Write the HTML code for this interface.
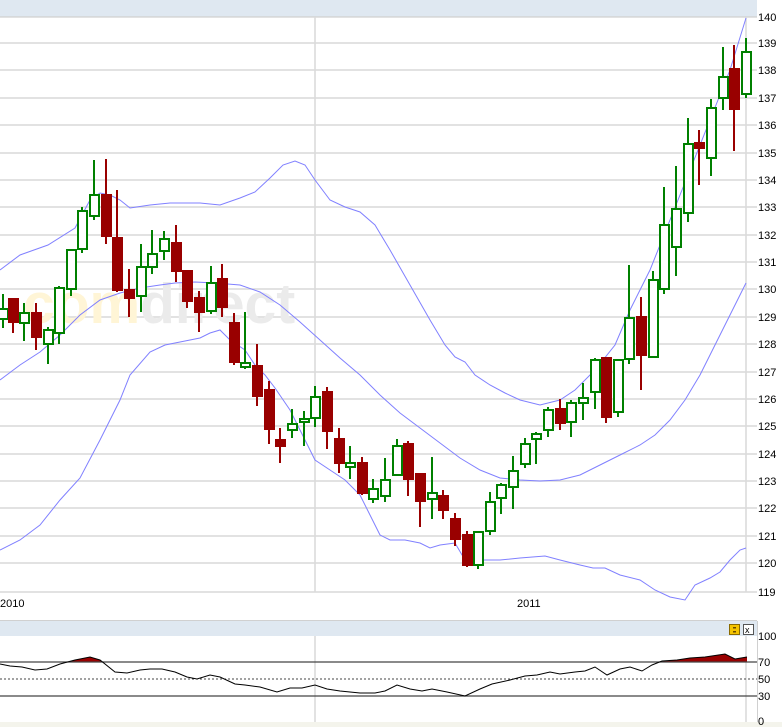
<!DOCTYPE html>
<html><head><meta charset="utf-8"><style>
html,body{margin:0;padding:0;background:#fff;width:782px;height:727px;overflow:hidden}
svg{display:block}
text{font-family:"Liberation Sans",sans-serif;font-size:11px;fill:#000}
</style></head><body>
<svg width="782" height="727" viewBox="0 0 782 727">
<rect x="0" y="0" width="757" height="16" fill="#dfe8f1"/>
<line x1="0" y1="16.5" x2="757" y2="16.5" stroke="#cfd8e0"/>
<g stroke="#d9d9d9" stroke-width="1.5">
<line x1="0" y1="17" x2="757" y2="17"/><line x1="0" y1="43" x2="757" y2="43"/><line x1="0" y1="70" x2="757" y2="70"/><line x1="0" y1="98" x2="757" y2="98"/><line x1="0" y1="125" x2="757" y2="125"/><line x1="0" y1="153" x2="757" y2="153"/><line x1="0" y1="180" x2="757" y2="180"/><line x1="0" y1="207" x2="757" y2="207"/><line x1="0" y1="235" x2="757" y2="235"/><line x1="0" y1="262" x2="757" y2="262"/><line x1="0" y1="289" x2="757" y2="289"/><line x1="0" y1="317" x2="757" y2="317"/><line x1="0" y1="344" x2="757" y2="344"/><line x1="0" y1="372" x2="757" y2="372"/><line x1="0" y1="399" x2="757" y2="399"/><line x1="0" y1="426" x2="757" y2="426"/><line x1="0" y1="454" x2="757" y2="454"/><line x1="0" y1="481" x2="757" y2="481"/><line x1="0" y1="508" x2="757" y2="508"/><line x1="0" y1="536" x2="757" y2="536"/><line x1="0" y1="563" x2="757" y2="563"/><line x1="0" y1="592" x2="757" y2="592"/>
<line x1="315" y1="17" x2="315" y2="592"/><line x1="746" y1="17" x2="746" y2="592"/>
<line x1="315" y1="636" x2="315" y2="722"/><line x1="746" y1="636" x2="746" y2="722"/>
</g>
<text x="23" y="323" style="font-size:57px;font-weight:bold;fill:#fff5d6">com</text>
<text x="140" y="323" style="font-size:57px;font-weight:bold;fill:#ebebeb">direct</text>
<g fill="none" stroke="#8080ff" stroke-width="1">
<polyline points="0,270 20,255 48,245 75,228 90,200 100,193 110,195 120,200 130,208 150,205 170,203 200,203 220,205 240,198 255,192 270,178 283,165 295,161 305,165 315,180 330,200 345,207 360,212 375,225 390,250 410,285 430,320 445,345 455,357 465,362 475,375 490,385 505,393 520,400 540,405 560,400 575,390 595,370 615,345 630,310 650,270 670,220 690,170 710,120 730,70 746,18"/>
<polyline points="0,380 20,365 40,352 60,335 80,315 100,300 120,293 140,288 160,285 175,283 195,282 215,283 240,285 260,292 280,305 300,322 320,340 340,358 360,375 380,395 400,413 420,428 440,443 460,458 480,470 500,478 520,480 540,481 560,480 580,475 600,465 620,455 640,445 655,435 670,420 685,400 700,375 715,345 730,315 746,283"/>
<polyline points="0,550 20,540 40,525 60,500 80,478 100,440 120,400 130,375 150,352 165,345 180,342 200,338 210,333 220,330 230,340 245,350 255,365 265,375 275,388 290,410 300,430 315,460 330,470 345,480 360,495 370,515 380,535 390,540 405,540 420,543 430,548 440,545 455,543 465,560 480,560 500,560 520,558 545,556 560,560 580,565 593,568 605,568 620,575 640,580 655,590 670,597 685,600 695,585 710,578 720,572 730,560 740,550 746,548"/>
</g>
<g id="c" stroke-width="2">
<!-- green: g, red: r -->
<g stroke="#008000" fill="#fff">
<line x1="3" y1="294" x2="3" y2="328"/><rect x="-1" y="309" width="9" height="10"/>
<line x1="24" y1="303" x2="24" y2="341"/><rect x="20" y="313" width="9" height="10"/>
<line x1="48" y1="327" x2="48" y2="364"/><rect x="44" y="330" width="9" height="14"/>
<line x1="59" y1="286" x2="59" y2="344"/><rect x="55" y="288" width="9" height="45"/>
<line x1="71" y1="250" x2="71" y2="296"/><rect x="67" y="250" width="9" height="39"/>
<line x1="82" y1="207" x2="82" y2="253"/><rect x="78" y="211" width="9" height="38"/>
<line x1="94" y1="160" x2="94" y2="220"/><rect x="90" y="195" width="9" height="21"/>
<line x1="141" y1="244" x2="141" y2="312"/><rect x="137" y="267" width="9" height="29"/>
<line x1="152" y1="230" x2="152" y2="274"/><rect x="148" y="254" width="9" height="13"/>
<line x1="164" y1="231" x2="164" y2="260"/><rect x="160" y="239" width="9" height="12"/>
<line x1="211" y1="266" x2="211" y2="314"/><rect x="207" y="283" width="9" height="28"/>
<line x1="245" y1="312" x2="245" y2="369"/><rect x="241" y="363" width="9" height="4"/>
<line x1="292" y1="409" x2="292" y2="438"/><rect x="288" y="424" width="9" height="6"/>
<line x1="304" y1="411" x2="304" y2="446"/><rect x="300" y="419" width="9" height="3"/>
<line x1="315" y1="386" x2="315" y2="427"/><rect x="311" y="397" width="9" height="21"/>
<line x1="350" y1="446" x2="350" y2="479"/><rect x="346" y="463" width="9" height="4"/>
<line x1="373" y1="479" x2="373" y2="503"/><rect x="369" y="489" width="9" height="10"/>
<line x1="385" y1="458" x2="385" y2="502"/><rect x="381" y="480" width="9" height="16"/>
<line x1="397" y1="439" x2="397" y2="476"/><rect x="393" y="446" width="9" height="29"/>
<line x1="432" y1="457" x2="432" y2="519"/><rect x="428" y="493" width="9" height="6"/>
<line x1="478" y1="531" x2="478" y2="569"/><rect x="474" y="532" width="9" height="33"/>
<line x1="490" y1="492" x2="490" y2="535"/><rect x="486" y="502" width="9" height="29"/>
<line x1="501" y1="483" x2="501" y2="514"/><rect x="497" y="485" width="9" height="13"/>
<line x1="513" y1="456" x2="513" y2="509"/><rect x="509" y="471" width="9" height="16"/>
<line x1="525" y1="438" x2="525" y2="468"/><rect x="521" y="444" width="9" height="20"/>
<line x1="536" y1="432" x2="536" y2="464"/><rect x="532" y="434" width="9" height="5"/>
<line x1="548" y1="407" x2="548" y2="437"/><rect x="544" y="410" width="9" height="20"/>
<line x1="571" y1="400" x2="571" y2="437"/><rect x="567" y="403" width="9" height="19"/>
<line x1="583" y1="383" x2="583" y2="420"/><rect x="579" y="398" width="9" height="5"/>
<line x1="595" y1="358" x2="595" y2="409"/><rect x="591" y="360" width="9" height="32"/>
<line x1="618" y1="359" x2="618" y2="417"/><rect x="614" y="360" width="9" height="52"/>
<line x1="629" y1="265" x2="629" y2="364"/><rect x="625" y="318" width="9" height="41"/>
<line x1="653" y1="271" x2="653" y2="358"/><rect x="649" y="280" width="9" height="77"/>
<line x1="664" y1="187" x2="664" y2="294"/><rect x="660" y="225" width="9" height="64"/>
<line x1="676" y1="166" x2="676" y2="276"/><rect x="672" y="209" width="9" height="38"/>
<line x1="688" y1="118" x2="688" y2="222"/><rect x="684" y="144" width="9" height="69"/>
<line x1="711" y1="99" x2="711" y2="176"/><rect x="707" y="108" width="9" height="50"/>
<line x1="723" y1="47" x2="723" y2="110"/><rect x="719" y="77" width="9" height="21"/>
<line x1="746" y1="38" x2="746" y2="98"/><rect x="742" y="52" width="9" height="42"/>
</g>
<g stroke="#990000" fill="#990000">
<line x1="13" y1="299" x2="13" y2="333"/><rect x="9" y="299" width="9" height="23"/>
<line x1="36" y1="303" x2="36" y2="350"/><rect x="32" y="313" width="9" height="24"/>
<line x1="106" y1="159" x2="106" y2="244"/><rect x="102" y="195" width="9" height="41"/>
<line x1="117" y1="190" x2="117" y2="292"/><rect x="113" y="238" width="9" height="52"/>
<line x1="129" y1="269" x2="129" y2="317"/><rect x="125" y="290" width="9" height="8"/>
<line x1="176" y1="225" x2="176" y2="282"/><rect x="172" y="243" width="9" height="28"/>
<line x1="187" y1="270" x2="187" y2="308"/><rect x="183" y="271" width="9" height="30"/>
<line x1="199" y1="291" x2="199" y2="332"/><rect x="195" y="298" width="9" height="14"/>
<line x1="222" y1="264" x2="222" y2="317"/><rect x="218" y="279" width="9" height="28"/>
<line x1="234" y1="313" x2="234" y2="365"/><rect x="230" y="323" width="9" height="39"/>
<line x1="257" y1="344" x2="257" y2="406"/><rect x="253" y="366" width="9" height="30"/>
<line x1="269" y1="381" x2="269" y2="444"/><rect x="265" y="390" width="9" height="39"/>
<line x1="280" y1="428" x2="280" y2="463"/><rect x="276" y="440" width="9" height="6"/>
<line x1="327" y1="387" x2="327" y2="449"/><rect x="323" y="392" width="9" height="39"/>
<line x1="339" y1="428" x2="339" y2="473"/><rect x="335" y="439" width="9" height="24"/>
<line x1="362" y1="457" x2="362" y2="495"/><rect x="358" y="463" width="9" height="30"/>
<line x1="408" y1="441" x2="408" y2="496"/><rect x="404" y="444" width="9" height="35"/>
<line x1="420" y1="474" x2="420" y2="527"/><rect x="416" y="474" width="9" height="27"/>
<line x1="443" y1="490" x2="443" y2="519"/><rect x="439" y="496" width="9" height="14"/>
<line x1="455" y1="513" x2="455" y2="546"/><rect x="451" y="519" width="9" height="20"/>
<line x1="467" y1="531" x2="467" y2="567"/><rect x="463" y="535" width="9" height="30"/>
<line x1="560" y1="399" x2="560" y2="430"/><rect x="556" y="409" width="9" height="14"/>
<line x1="606" y1="357" x2="606" y2="423"/><rect x="602" y="358" width="9" height="59"/>
<line x1="641" y1="297" x2="641" y2="390"/><rect x="637" y="317" width="9" height="38"/>
<line x1="699" y1="130" x2="699" y2="185"/><rect x="695" y="143" width="9" height="5"/>
<line x1="734" y1="45" x2="734" y2="151"/><rect x="730" y="69" width="9" height="40"/>
</g>
</g>
<g>
<text x="758" y="47">139</text><text x="758" y="21">140</text><text x="758" y="74">138</text><text x="758" y="102">137</text><text x="758" y="129">136</text><text x="758" y="157">135</text><text x="758" y="184">134</text><text x="758" y="211">133</text><text x="758" y="239">132</text><text x="758" y="266">131</text><text x="758" y="293">130</text><text x="758" y="321">129</text><text x="758" y="348">128</text><text x="758" y="376">127</text><text x="758" y="403">126</text><text x="758" y="430">125</text><text x="758" y="458">124</text><text x="758" y="485">123</text><text x="758" y="512">122</text><text x="758" y="540">121</text><text x="758" y="567">120</text><text x="758" y="596">119</text>
<text x="0" y="607">2010</text><text x="517" y="607">2011</text>
</g>
<!-- RSI -->
<line x1="0" y1="620.5" x2="757" y2="620.5" stroke="#d0d0d0"/>
<rect x="0" y="621" width="757" height="15" fill="#dfe8f1"/>
<rect x="729.5" y="624.5" width="10" height="10" fill="#f5c400" stroke="#8a6a00"/>
<rect x="733" y="627" width="3" height="1.5" fill="#6a4a00"/><rect x="733" y="631" width="3" height="1.5" fill="#6a4a00"/>
<rect x="743.5" y="624.5" width="10" height="10" fill="#fff" stroke="#555"/>
<text x="745" y="633" style="font-size:9px">x</text>
<rect x="0" y="722" width="782" height="5" fill="#f4f4ec"/>
<defs><clipPath id="ov"><rect x="0" y="636" width="757" height="26"/></clipPath></defs>
<polygon clip-path="url(#ov)" fill="#990000" points="0,664 10,666 22,667 35,670 47,669 60,664 75,660 90,657 100,660 115,672 127,673 140,670 150,669 162,669 175,672 187,677 197,679 210,675 220,677 235,684 245,685 260,687 277,692 290,688 302,688 315,685 327,689 340,691 360,693 375,693 385,691 397,685 410,689 422,691 432,689 447,692 465,696 480,689 492,684 510,680 525,676 537,675 550,672 560,674 575,672 585,671 595,667 607,675 620,669 630,667 642,671 652,665 662,661 677,660 690,658 705,657 725,654 735,659 747,657 747,662 0,662"/>
<line x1="0" y1="662" x2="757" y2="662" stroke="#444" stroke-width="1.2"/>
<line x1="0" y1="679" x2="757" y2="679" stroke="#444" stroke-width="1" stroke-dasharray="2,2"/>
<line x1="0" y1="696" x2="757" y2="696" stroke="#444" stroke-width="1.2"/>
<polyline fill="none" stroke="#000" stroke-width="1" points="0,664 10,666 22,667 35,670 47,669 60,664 75,660 90,657 100,660 115,672 127,673 140,670 150,669 162,669 175,672 187,677 197,679 210,675 220,677 235,684 245,685 260,687 277,692 290,688 302,688 315,685 327,689 340,691 360,693 375,693 385,691 397,685 410,689 422,691 432,689 447,692 465,696 480,689 492,684 510,680 525,676 537,675 550,672 560,674 575,672 585,671 595,667 607,675 620,669 630,667 642,671 652,665 662,661 677,660 690,658 705,657 725,654 735,659 747,657"/>
<line x1="757.5" y1="621" x2="757.5" y2="722" stroke="#d0d0d0"/>
<text x="758" y="640">100</text><text x="758" y="666">70</text><text x="758" y="683">50</text><text x="758" y="700">30</text><text x="758" y="725">0</text>
</svg>
</body></html>
